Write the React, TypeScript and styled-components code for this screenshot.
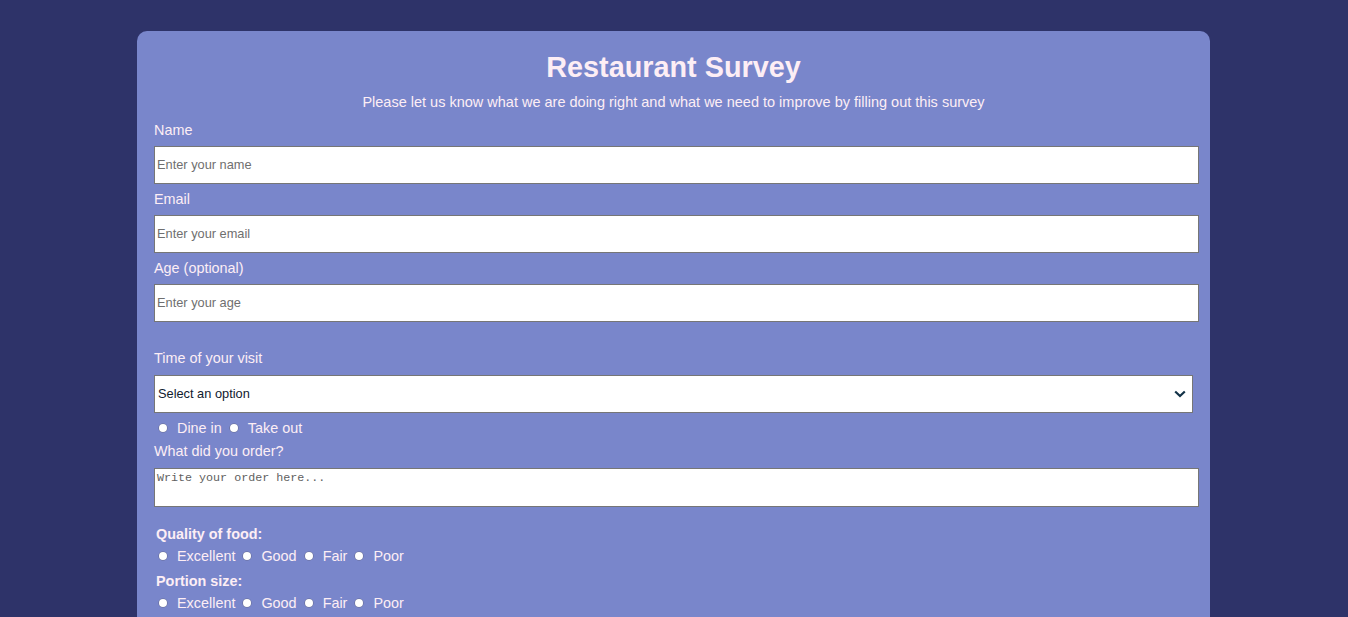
import React from "react";
import styled, { createGlobalStyle } from "styled-components";

const GlobalStyle = createGlobalStyle`
  html, body {
    margin: 0;
    padding: 0;
    background: #2e3369;
    font-family: "Liberation Sans", Arial, sans-serif;
  }
  body {
    padding-right: 1px;
  }
`;

const Card = styled.main`
  box-sizing: border-box;
  width: 1073px;
  margin: 31px auto 0;
  padding: 20px 17px 40px;
  background: #7986cb;
  border-radius: 10px;
  color: #fdeef5;
  display: flex;
  flex-direction: column;
`;

const Title = styled.h1`
  margin: 0;
  font-size: 28.8px;
  line-height: 33px;
  font-weight: 700;
  text-align: center;
`;

const Subtitle = styled.p`
  margin: 10px 0 0;
  font-size: 14.5px;
  line-height: 16px;
  text-align: center;
`;

const Label = styled.label<{ $top: number; $bottom?: number }>`
  display: block;
  margin: ${(p) => p.$top}px 0 ${(p) => p.$bottom ?? 8}px;
  font-size: 14.4px;
  line-height: 16px;
`;

const GroupTitle = styled.div<{ $top: number }>`
  margin: ${(p) => p.$top}px 0 0 2px;
  font-size: 14.4px;
  line-height: 16px;
  font-weight: 700;
`;

const TextInput = styled.input`
  box-sizing: content-box;
  width: 100%;
  height: 34px;
  padding: 0 2px 2px;
  margin: 0;
  border: 1px solid #767676;
  background: #fff;
  font-family: "Liberation Sans", Arial, sans-serif;
  font-size: 12.8px;
  color: #222;
  outline: none;
  &::placeholder {
    color: #6f6f6f;
  }
`;

const SelectWrap = styled.div`
  position: relative;
  width: 100%;
  height: 38px;
`;

const Select = styled.select`
  box-sizing: border-box;
  appearance: none;
  width: 100%;
  height: 38px;
  margin: 0;
  padding: 0 0 1px 3px;
  border: 1px solid #767676;
  border-radius: 0;
  background: #fff;
  font-family: "Liberation Sans", Arial, sans-serif;
  font-size: 12.8px;
  color: #10202e;
  outline: none;
`;

const Chevron = styled.svg`
  position: absolute;
  right: 7px;
  top: 15px;
  width: 12px;
  height: 8px;
  pointer-events: none;
`;

const TextArea = styled.textarea`
  box-sizing: border-box;
  display: block;
  width: calc(100% + 6px);
  height: 39px;
  margin: 9px 0 0;
  padding: 2px;
  border: 1px solid #767676;
  background: #fff;
  font-family: "Liberation Mono", monospace;
  font-size: 11.7px;
  resize: none;
  outline: none;
  &::placeholder {
    color: #5f5f5f;
  }
`;

const RadioRow = styled.div<{ $top: number }>`
  display: flex;
  align-items: center;
  gap: 3px;
  margin-top: ${(p) => p.$top}px;
  font-size: 14.4px;
  line-height: 16px;
`;

const Option = styled.label`
  display: inline-flex;
  align-items: center;
`;

const Radio = styled.input`
  appearance: none;
  box-sizing: border-box;
  width: 8px;
  height: 8px;
  margin: 0 10px 0 5px;
  border-radius: 50%;
  background: #fff;
  box-shadow: 0 0 0 0.6px rgba(90, 90, 110, 0.6);
`;

const RadioGroup: React.FC<{ name: string; options: string[]; top: number }> = ({
  name,
  options,
  top,
}) => (
  <RadioRow $top={top}>
    {options.map((o) => (
      <Option key={o}>
        <Radio type="radio" name={name} value={o} />
        {o}
      </Option>
    ))}
  </RadioRow>
);

const ratings = ["Excellent", "Good", "Fair", "Poor"];

export default function App() {
  return (
    <>
      <GlobalStyle />
      <Card>
        <Title>Restaurant Survey</Title>
        <Subtitle>
          Please let us know what we are doing right and what we need to improve by filling out this survey
        </Subtitle>

        <Label $top={12} htmlFor="name">Name</Label>
        <TextInput id="name" type="text" placeholder="Enter your name" />

        <Label $top={7} htmlFor="email">Email</Label>
        <TextInput id="email" type="email" placeholder="Enter your email" />

        <Label $top={7} htmlFor="age">Age (optional)</Label>
        <TextInput id="age" type="number" placeholder="Enter your age" />

        <Label $top={28} $bottom={9} htmlFor="time">Time of your visit</Label>
        <SelectWrap>
          <Select id="time" defaultValue="">
            <option value="">Select an option</option>
            <option value="breakfast">Breakfast</option>
            <option value="lunch">Lunch</option>
            <option value="dinner">Dinner</option>
          </Select>
          <Chevron viewBox="0 0 12 8">
            <path d="M1.2 1.5 L6 6 L10.8 1.5" fill="none" stroke="#123247" strokeWidth="2.2" />
          </Chevron>
        </SelectWrap>

        <RadioGroup name="service" options={["Dine in", "Take out"]} top={7} />

        <Label $top={7} $bottom={0} htmlFor="order">What did you order?</Label>
        <TextArea id="order" placeholder="Write your order here..." />

        <GroupTitle $top={19}>Quality of food:</GroupTitle>
        <RadioGroup name="quality" options={ratings} top={6} />

        <GroupTitle $top={9}>Portion size:</GroupTitle>
        <RadioGroup name="portion" options={ratings} top={6} />
      </Card>
    </>
  );
}
